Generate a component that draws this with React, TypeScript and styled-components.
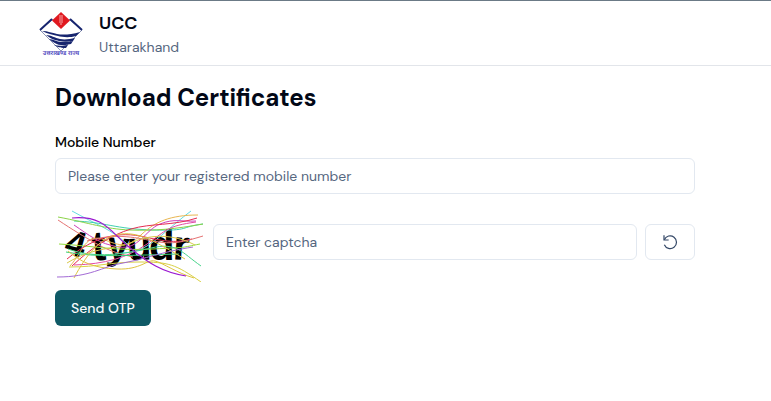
import React, { useState } from "react";
import styled, { createGlobalStyle } from "styled-components";

const GlobalStyle = createGlobalStyle`
  *, *::before, *::after { box-sizing: border-box; }
  body {
    margin: 0;
    background: #fff;
    color: #020817;
    font-family: "DM Sans", Inter, "Open Sans", sans-serif;
    font-size: 14px;
    line-height: 20px;
  }
`;

const Header = styled.header`
  display: flex;
  align-items: center;
  gap: 14px;
  height: 66px;
  padding: 2px 37px 0;
  border-top: 1px solid #6b7a86;
  border-bottom: 1px solid #e2e5ea;
`;

const Brand = styled.div`
  display: flex;
  flex-direction: column;
`;

const BrandName = styled.span`
  font-size: 18px;
  line-height: 26px;
  font-weight: 600;
`;

const BrandRegion = styled.span`
  line-height: 22px;
  color: #56677f;
`;

const Main = styled.main`
  padding: 16px 76px 16px 55px;
`;

const Form = styled.form`
  display: flex;
  flex-direction: column;
  align-items: stretch;
  gap: 8px;
`;

const Title = styled.h1`
  margin: 0 0 20px;
  font-size: 24px;
  line-height: 32px;
  font-weight: 700;
`;

const Label = styled.label`
  line-height: 16px;
  font-weight: 500;
  color: #000;
`;

const Input = styled.input`
  flex: 1;
  width: 100%;
  min-width: 0;
  min-height: 36px;
  padding: 0 12px;
  border: 1px solid #e2e8f0;
  border-radius: 6px;
  background: #fff;
  color: #020817;
  font: inherit;
  &::placeholder { color: #56677f; opacity: 1; }
`;

const CaptchaRow = styled.div`
  display: flex;
  align-items: center;
  gap: 8px;
`;

const Button = styled.button<{ $outline?: boolean }>`
  display: inline-flex;
  align-items: center;
  justify-content: center;
  align-self: ${(p) => (p.$outline ? "center" : "flex-start")};
  height: 36px;
  padding: 0 16px;
  border: ${(p) => (p.$outline ? "1px solid #e2e8f0" : "0")};
  border-radius: 6px;
  background: ${(p) => (p.$outline ? "#fff" : "#0f5a66")};
  color: ${(p) => (p.$outline ? "#334766" : "#f8fafc")};
  font: inherit;
  font-weight: 500;
  cursor: pointer;
`;

const Fixed = styled.svg`
  flex: none;
  display: block;
`;

function Logo() {
  return (
    <Fixed width="48" height="48" viewBox="0 0 48 48" role="img" aria-label="Uttarakhand">
      <path d="M16 9 3 20 24 41 45 20 32 9" fill="none" stroke="#8d96b5" strokeWidth="1" />
      <path d="M15 9 3 20M33 9 45 20" stroke="#17256f" strokeWidth="2" />
      <path d="M24 2 33 10.500 24 19 15 10.500Z" fill="#e01920" />
      <path d="M22 6h4M22 8h4M22 10h4M22 12h4M23 14h2" stroke="#f6a9a9" strokeWidth="1" />
      <path d="M5 21c6 0 10 2 15 3s13 1 23-2l-4 4c-7 2-14 1-18 0S11 24 5 21Z" fill="#17256f" />
      <path d="M9 25c5 0 9 3 14 4s10 0 15-1l-2 3c-6 1-10 1-14 0s-8-2-13-6Z" fill="#17256f" />
      <path d="M12 29c4 0 8 3 12 3s8 0 12-1l-2 3c-4 1-7 1-10 1s-7-2-12-6ZM17 35c4 1 8 1 14 0l-2 3c-4 0-7 0-12-3Z" fill="#17256f" />
      <text x="24" y="45" textAnchor="middle" textRendering="geometricPrecision" fill="#3d35b8" fontSize="6" fontWeight="600" fontFamily='"Noto Sans Devanagari", "Noto Sans", sans-serif'>
        उत्तराखण्ड राज्य
      </text>
    </Fixed>
  );
}

const glyphs = [
  { char: "4", x: 11, y: 54, size: 36, turn: 16 },
  { char: "t", x: 37, y: 58, size: 42, turn: -4 },
  { char: "y", x: 52, y: 57, size: 40, turn: 6 },
  { char: "u", x: 72, y: 58, size: 40, turn: -2 },
  { char: "d", x: 94, y: 58, size: 42, turn: 0 },
  { char: "r", x: 118, y: 58, size: 42, turn: 4 },
];

const strands: [string, string][] = [
  ["#62dce0", "M17 9C42 23 56 27 72 42"],
  ["#3fcfb0", "M19 19C50 20 60 27 98 28S124 25 148 22"],
  ["#62dce0", "M136 9C116 24 104 37 92 44S74 50 60 52"],
  ["#8bd348", "M3 15C35 21 50 27 75 28S120 27 148 22"],
  ["#e57373", "M3 18C18 28 28 34 42 42S66 52 78 55"],
  ["#cf3fb7", "M19 23C34 33 44 42 64 45S90 28 105 22S126 20 141 19"],
  ["#e8b650", "M143 13C115 13 100 20 87 32S70 46 50 38S28 50 15 64"],
  ["#e52c52", "M142 16C118 24 96 21 76 27S36 46 17 64"],
  ["#e34ba6", "M19 63C50 62 72 56 92 42S112 24 141 20"],
  ["#94db3d", "M4 42C40 44 60 49 98 47S124 46 145 42"],
  ["#e52c52", "M12 57C40 34 64 29 90 35S124 40 137 37"],
  ["#e57373", "M32 39C60 31 78 35 98 39S128 40 148 34"],
  ["#48d48a", "M13 47C40 57 70 52 96 46S126 50 146 64"],
  ["#39cf78", "M11 50C42 56 80 53 124 52"],
  ["#d8d044", "M14 65C44 65 54 60 84 60S120 62 146 80"],
  ["#dfc440", "M13 49C26 60 38 66 62 67S92 57 100 59S122 71 139 76"],
  ["#dfc440", "M19 76C31 53 46 34 66 32S100 40 130 57"],
  ["#a36bd5", "M2 75C36 75 46 65 68 61S106 50 138 45"],
  ["#d8c84a", "M12 61C40 44 60 48 78 40S119 32 140 43"],
];

function Captcha() {
  return (
    <Fixed width="150" height="80" viewBox="0 0 150 80" role="img" aria-label="Captcha">
      {glyphs.map((g) => (
        <text
          key={g.char}
          x={g.x}
          y={g.y}
          transform={`rotate(${g.turn} ${g.x + 10} ${g.y - 12})`}
          fontFamily='"Liberation Sans", Arial, sans-serif'
          fontWeight="700"
          fontSize={g.size}
          fill="#000"
        >
          {g.char}
        </text>
      ))}
      <g fill="none" strokeWidth="1">
        {strands.map(([color, d]) => (
          <path key={d} d={d} stroke={color} />
        ))}
        <path d="M17 16C48 13 55 29 74 45S107 70 131 74" stroke="#9b18d0" strokeWidth="1.2" />
      </g>
    </Fixed>
  );
}

function RefreshIcon() {
  return (
    <svg width="16" height="16" viewBox="0 0 24 24" fill="none" stroke="currentColor" strokeWidth="1.8" aria-hidden="true">
      <path d="M3.500 8.500A9.500 9.500 0 1 1 3.500 16" />
      <path d="M3 2v7h7" />
    </svg>
  );
}

export default function App() {
  const [mobile, setMobile] = useState("");
  const [captcha, setCaptcha] = useState("");
  return (
    <>
      <GlobalStyle />
      <Header>
        <Logo />
        <Brand>
          <BrandName>UCC</BrandName>
          <BrandRegion>Uttarakhand</BrandRegion>
        </Brand>
      </Header>
      <Main>
        <Title>Download Certificates</Title>
        <Form onSubmit={(e) => e.preventDefault()}>
          <Label htmlFor="mobile">Mobile Number</Label>
          <Input id="mobile" type="tel" placeholder="Please enter your registered mobile number" value={mobile} onChange={(e) => setMobile(e.target.value)} />
          <CaptchaRow>
            <Captcha />
            <Input aria-label="Captcha" placeholder="Enter captcha" value={captcha} onChange={(e) => setCaptcha(e.target.value)} />
            <Button type="button" $outline aria-label="Refresh captcha" onClick={() => setCaptcha("")}>
              <RefreshIcon />
            </Button>
          </CaptchaRow>
          <Button type="submit">Send OTP</Button>
        </Form>
      </Main>
    </>
  );
}
